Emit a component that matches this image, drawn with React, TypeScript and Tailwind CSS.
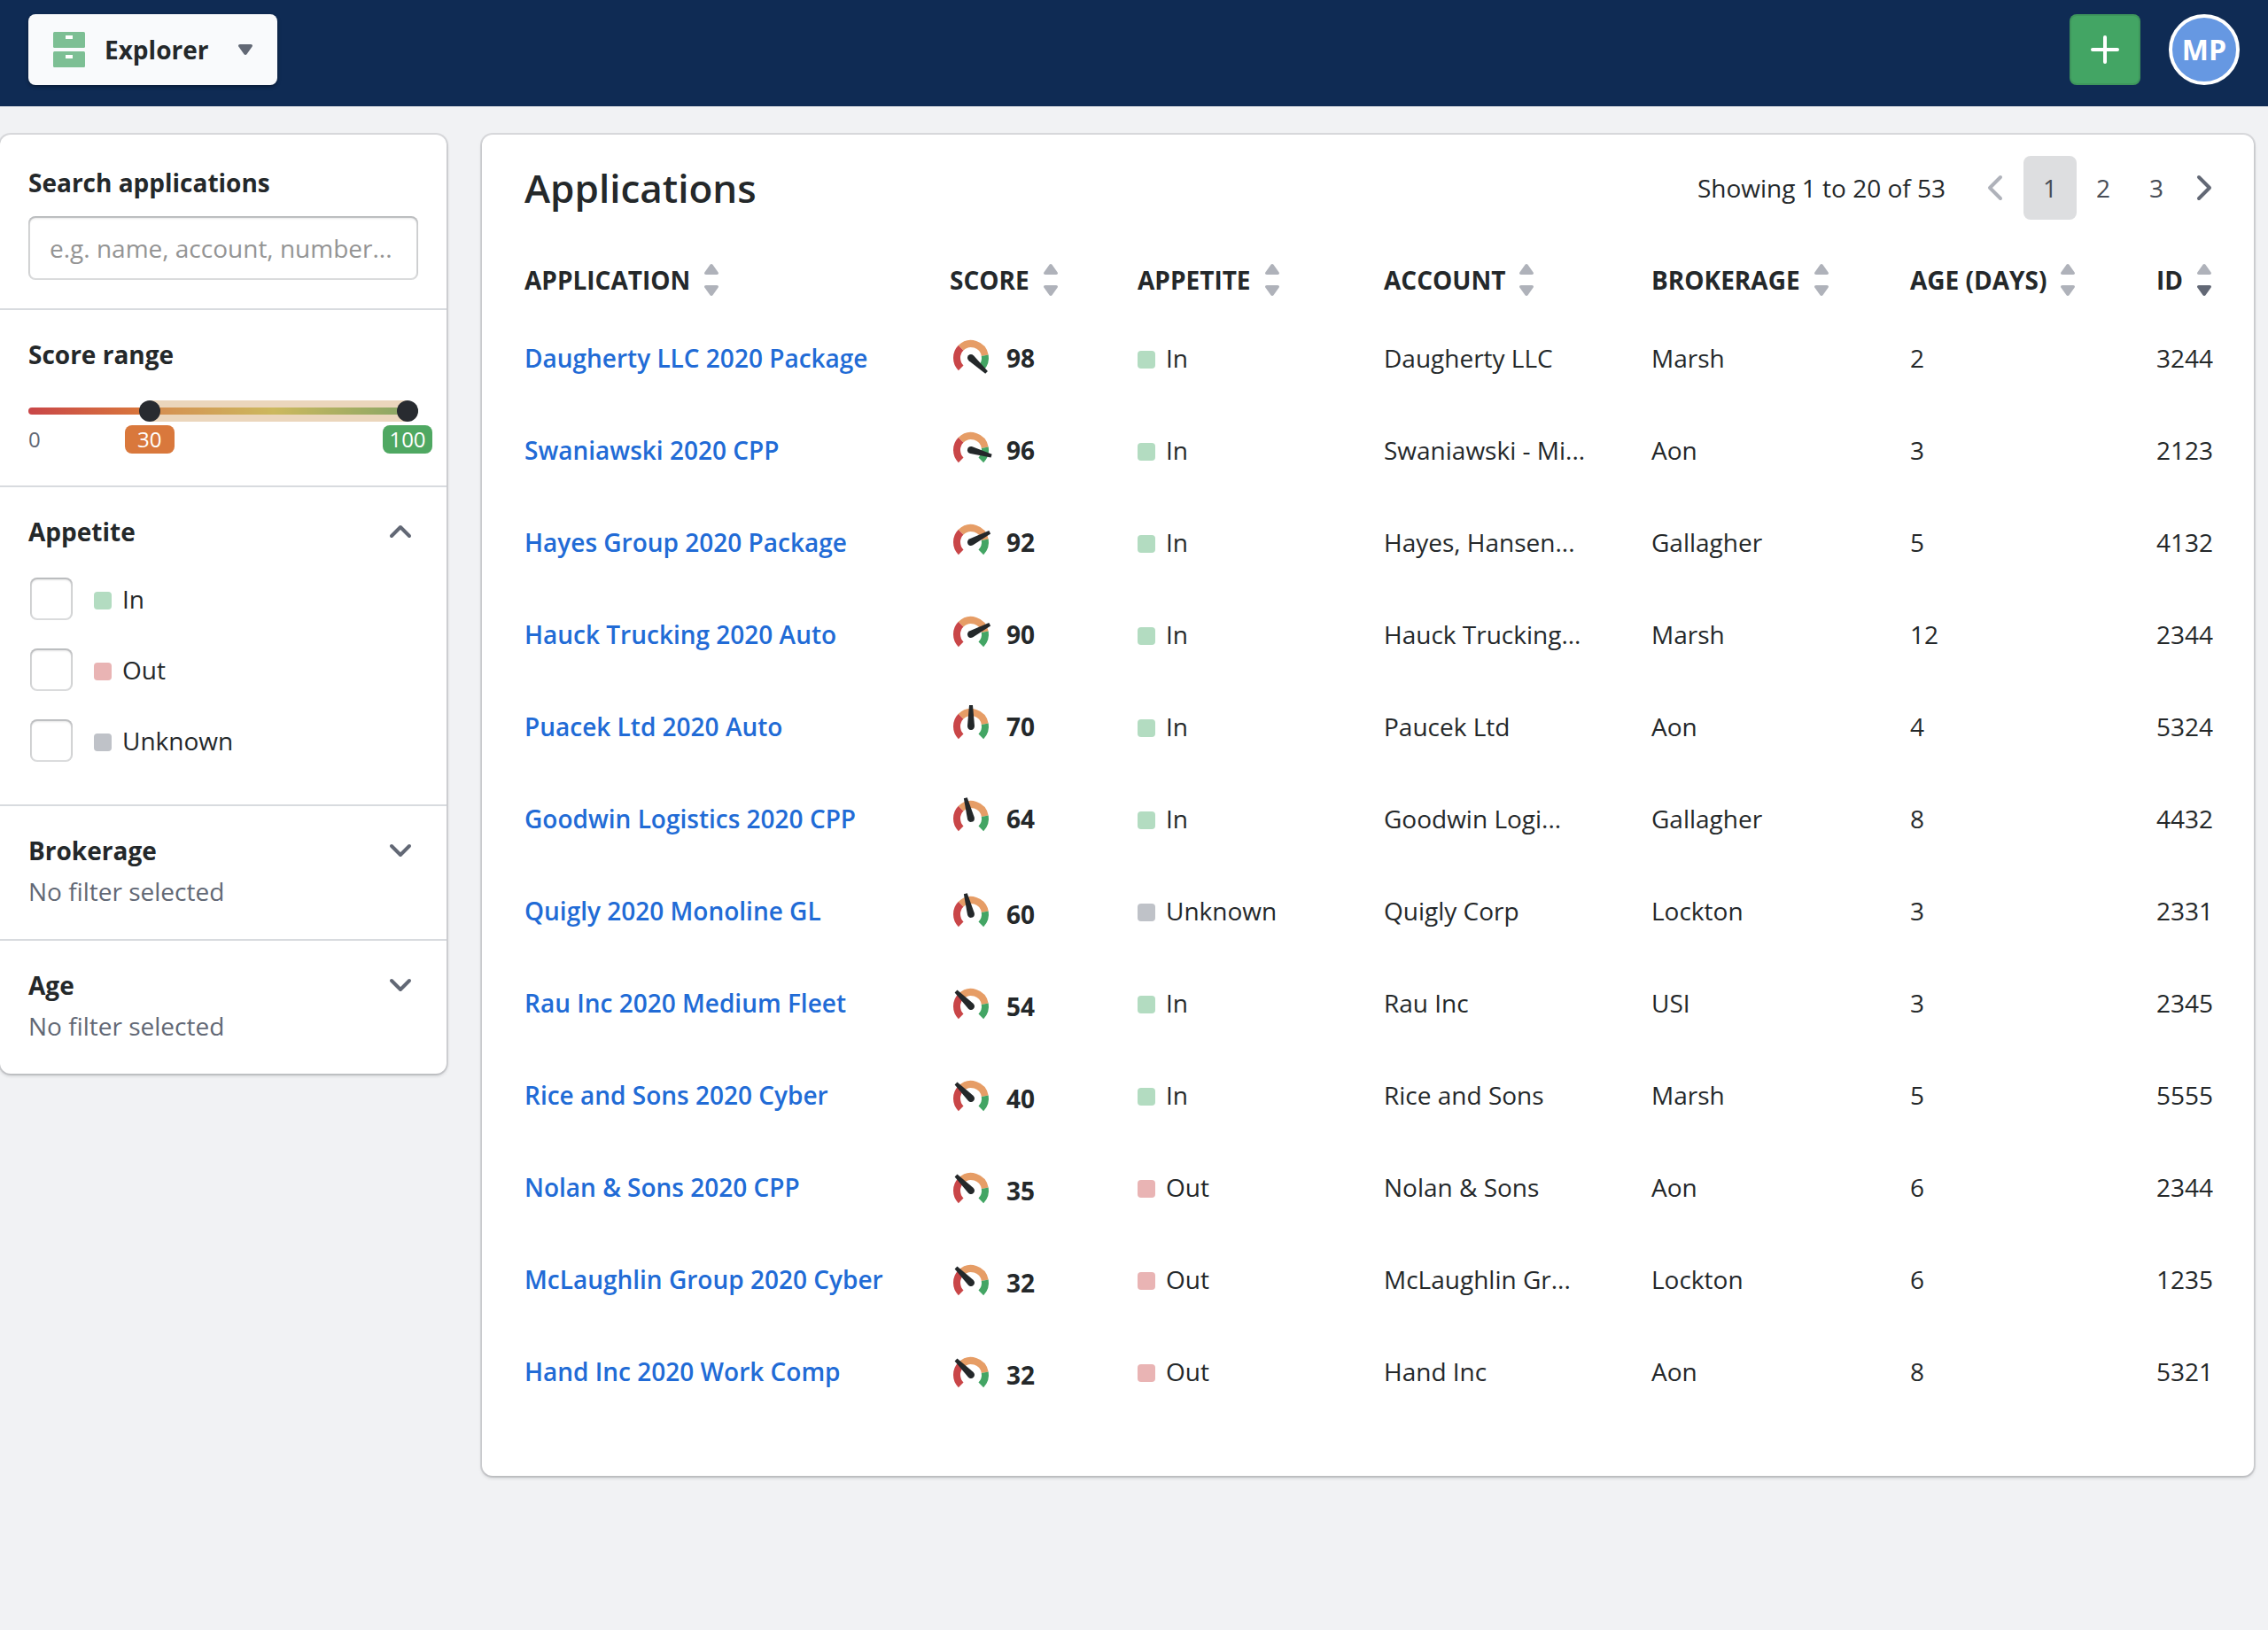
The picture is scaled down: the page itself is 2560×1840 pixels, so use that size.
import { useState } from "react";

const ROWS = [
  { name: "Daugherty LLC 2020 Package", score: 98, angle: 133, appetite: "In", account: "Daugherty LLC", brokerage: "Marsh", age: 2, id: "3244" },
  { name: "Swaniawski 2020 CPP", score: 96, angle: 106, appetite: "In", account: "Swaniawski - Mi...", brokerage: "Aon", age: 3, id: "2123" },
  { name: "Hayes Group 2020 Package", score: 92, angle: 62, appetite: "In", account: "Hayes, Hansen...", brokerage: "Gallagher", age: 5, id: "4132" },
  { name: "Hauck Trucking 2020 Auto", score: 90, angle: 62, appetite: "In", account: "Hauck Trucking...", brokerage: "Marsh", age: 12, id: "2344" },
  { name: "Puacek Ltd 2020 Auto", score: 70, angle: 0, appetite: "In", account: "Paucek Ltd", brokerage: "Aon", age: 4, id: "5324" },
  { name: "Goodwin Logistics 2020 CPP", score: 64, angle: -15, appetite: "In", account: "Goodwin Logi...", brokerage: "Gallagher", age: 8, id: "4432" },
  { name: "Quigly 2020 Monoline GL", score: 60, angle: -15, appetite: "Unknown", account: "Quigly Corp", brokerage: "Lockton", age: 3, id: "2331" },
  { name: "Rau Inc 2020 Medium Fleet", score: 54, angle: -45, appetite: "In", account: "Rau Inc", brokerage: "USI", age: 3, id: "2345" },
  { name: "Rice and Sons 2020 Cyber", score: 40, angle: -45, appetite: "In", account: "Rice and Sons", brokerage: "Marsh", age: 5, id: "5555" },
  { name: "Nolan & Sons 2020 CPP", score: 35, angle: -45, appetite: "Out", account: "Nolan & Sons", brokerage: "Aon", age: 6, id: "2344" },
  { name: "McLaughlin Group 2020 Cyber", score: 32, angle: -45, appetite: "Out", account: "McLaughlin Gr...", brokerage: "Lockton", age: 6, id: "1235" },
  { name: "Hand Inc 2020 Work Comp", score: 32, angle: -45, appetite: "Out", account: "Hand Inc", brokerage: "Aon", age: 8, id: "5321" },
];

const COLUMNS = [
  { label: "Application", width: "w-[480px]" },
  { label: "Score", width: "w-[212px]" },
  { label: "Appetite", width: "w-[278px]" },
  { label: "Account", width: "w-[302px]" },
  { label: "Brokerage", width: "w-[292px]" },
  { label: "Age (days)", width: "w-[278px]" },
  { label: "ID", width: "w-[64px]" },
];

const SWATCH: Record<string, string> = {
  In: "bg-[#b3dcc1]",
  Out: "bg-[#e9b4b4]",
  Unknown: "bg-[#bfc2c8]",
};

const CARD = "bg-white rounded-xl shadow-[0_0_0_2px_rgba(16,22,26,0.1),0_2px_4px_rgba(16,22,26,0.2)]";

function Swatch({ kind }: { kind: string }) {
  return <span className={`mt-1 size-5 shrink-0 rounded ${SWATCH[kind]}`} />;
}

function Chevron({ d, className }: { d: string; className: string }) {
  return (
    <svg viewBox="0 0 32 32" className={`size-8 ${className}`} fill="none" stroke="currentColor" strokeLinecap="round" strokeLinejoin="round" aria-hidden="true">
      <path d={d} />
    </svg>
  );
}

function SortIcon({ active }: { active: boolean }) {
  return (
    <svg viewBox="0 0 16 36" className="h-9 w-4 shrink-0 text-[#afb2ba]" fill="currentColor" aria-hidden="true">
      <path d="M9.5.8 15.7 9.4C16.4 10.6 15.7 12 14.2 12H1.8C.3 12-.4 10.6.3 9.4L6.5.8C7.3-.2 8.7-.2 9.5.8Z" />
      <path className={active ? "text-[#626875]" : ""} d="M9.5 35.2 15.7 26.6C16.4 25.4 15.7 24 14.2 24H1.8C.3 24-.4 25.4.3 26.6L6.5 35.2C7.3 36.2 8.7 36.2 9.5 35.2Z" />
    </svg>
  );
}

function Gauge({ angle }: { angle: number }) {
  return (
    <svg viewBox="0 0 48 48" className="size-12 shrink-0" fill="none" strokeWidth="8" aria-hidden="true">
      <path stroke="#c94648" d="M12.69 35.31A16 16 0 0 1 12.69 12.69" />
      <path stroke="#e69d66" d="M12.69 12.69A16 16 0 0 1 39.76 21.22" />
      <path stroke="#43a564" d="M39.76 21.22A16 16 0 0 1 35.31 35.31" />
      <path
        fill="#24282a"
        transform={`rotate(${angle} 24 24)`}
        d="M22 0H26L28 23.5C28 26.2 26.5 28 24 28C21.5 28 20 26.2 20 23.5Z"
      />
    </svg>
  );
}

function FilterSection({ title, open, children }: { title: string; open?: boolean; children: React.ReactNode }) {
  return (
    <section className="border-t-2 border-[#d8dbdf] px-8 pt-7 pb-[34px]">
      <button aria-expanded={!!open} className="flex h-11 w-full items-center justify-between pr-1 font-bold">
        {title}
        <Chevron className="stroke-4 text-[#626875]" d={open ? "M6 21 16 11 26 21" : "M6 11 16 21 26 11"} />
      </button>
      {children}
    </section>
  );
}

function ScoreRange() {
  const [low, setLow] = useState(30);
  const [high, setHigh] = useState(100);
  const thumb =
    "pointer-events-none absolute inset-0 w-full appearance-none bg-transparent [&::-webkit-slider-thumb]:pointer-events-auto [&::-webkit-slider-thumb]:size-6 [&::-webkit-slider-thumb]:appearance-none [&::-webkit-slider-thumb]:rounded-full [&::-webkit-slider-thumb]:bg-[#282b30]";

  return (
    <div className="mt-[26px]">
      <div className="relative flex h-6 items-center">
        <div className="h-2 w-full rounded-full bg-[linear-gradient(to_right,#c94648,#d9783c_30%,#c6c954_63%,#43a564)]" />
        <div
          className="absolute inset-y-0 bg-[#d3a56a]/45"
          style={{ left: `calc(12px + (100% - 24px) * ${low / 100})`, right: `calc(12px + (100% - 24px) * ${1 - high / 100})` }}
        />
        <input type="range" aria-label="Minimum score" className={thumb} value={low} onChange={(e) => setLow(Math.min(+e.target.value, high))} />
        <input type="range" aria-label="Maximum score" className={thumb} value={high} onChange={(e) => setHigh(Math.max(+e.target.value, low))} />
      </div>
      <div className="relative mt-1 h-8 text-2xl/8">
        <span className="text-[#626875]">0</span>
        <span
          className="absolute top-0 w-14 -translate-x-1/2 rounded-lg bg-[#d9783c] text-center font-medium text-white"
          style={{ left: `calc(12px + (100% - 24px) * ${low / 100})` }}
        >
          {low}
        </span>
        <span
          className="absolute top-0 w-14 -translate-x-1/2 rounded-lg bg-[#4fa862] text-center font-medium text-white"
          style={{ left: `calc(12px + (100% - 24px) * ${high / 100})` }}
        >
          {high}
        </span>
      </div>
    </div>
  );
}

function Sidebar() {
  return (
    <aside className={`w-[504px] shrink-0 ${CARD}`}>
      <div className="px-8 pt-8 pb-8">
        <label htmlFor="search" className="block h-15 pt-[2px] font-bold">
          Search applications
        </label>
        <input
          id="search"
          type="text"
          placeholder="e.g. name, account, number..."
          className="h-18 w-full rounded-lg px-6 shadow-[inset_0_0_0_2px_rgba(16,22,26,0.15),inset_0_2px_3px_rgba(16,22,26,0.2)] placeholder:text-[#949494]"
        />
      </div>

      <section className="border-t-2 border-[#d8dbdf] px-8 pt-7 pb-9">
        <h2 className="h-12 pt-[2px] font-bold">Score range</h2>
        <ScoreRange />
      </section>

      <FilterSection title="Appetite" open>
        <div className="mt-[30px] mb-[14px] flex flex-col gap-8">
          {["In", "Out", "Unknown"].map((kind) => (
            <label key={kind} className="flex items-center pl-[2px]">
              <input
                type="checkbox"
                className="mr-6 size-12 appearance-none rounded-lg bg-white shadow-[inset_0_0_0_2px_rgba(16,22,26,0.15),inset_0_2px_3px_rgba(16,22,26,0.2)] checked:bg-[#216bd6]"
              />
              <Swatch kind={kind} />
              <span className="ml-3">{kind}</span>
            </label>
          ))}
        </div>
      </FilterSection>

      <FilterSection title="Brokerage">
        <p className="mt-1 text-[#626875]">No filter selected</p>
      </FilterSection>
      <FilterSection title="Age">
        <p className="mt-1 text-[#626875]">No filter selected</p>
      </FilterSection>
    </aside>
  );
}

function Pagination() {
  const [page, setPage] = useState(1);
  return (
    <nav aria-label="Pages" className="-mr-2 flex items-center">
      <span className="mr-10">Showing 1 to 20 of 53</span>
      <button aria-label="Previous page" className="mr-4">
        <Chevron className="stroke-4 text-[#afb2ba]" d="M22 4 10 16 22 28" />
      </button>
      {[1, 2, 3].map((n) => (
        <button
          key={n}
          onClick={() => setPage(n)}
          className={`h-18 w-15 rounded-lg text-[#474d57] ${n === page ? "bg-[#dddee0]" : ""}`}
        >
          {n}
        </button>
      ))}
      <button aria-label="Next page" className="ml-2">
        <Chevron className="stroke-4 text-[#626875]" d="M10 4 22 16 10 28" />
      </button>
    </nav>
  );
}

export default function App() {
  return (
    <div className="min-h-screen bg-[#f1f2f4] font-['Open_Sans',sans-serif] text-[28px]/10 text-[#24282a]">
      <header className="flex h-30 items-start justify-between bg-[#0f2b54] px-8 pt-4">
        <button className="flex h-20 items-center rounded-lg bg-[#f9fafc] px-7 font-bold shadow-[0_2px_4px_rgba(0,0,0,0.35)]">
          <svg viewBox="0 0 36 40" className="h-10 w-9" aria-hidden="true">
            <rect width="36" height="18" rx="1.5" fill="#7dbf94" />
            <rect y="22" width="36" height="18" rx="1.5" fill="#7dbf94" />
            <path d="M14 4h8v4h-8zM14 26h8v4h-8z" fill="#fff" />
          </svg>
          <span className="mr-[34px] ml-[22px]">Explorer</span>
          <svg viewBox="0 0 16 12" className="h-3 w-4 fill-[#626875]" aria-hidden="true">
            <path d="M9.5 11.2 15.7 2.6C16.4 1.4 15.7 0 14.2 0H1.8C.3 0-.4 1.4.3 2.6L6.5 11.2C7.3 12.2 8.7 12.2 9.5 11.2Z" />
          </svg>
        </button>
        <div className="flex gap-8">
          <button
            aria-label="New application"
            className="flex size-20 items-center justify-center rounded-lg bg-[#43a564] shadow-[inset_0_0_0_2px_rgba(16,22,26,0.1)]"
          >
            <svg viewBox="0 0 32 32" className="size-8 stroke-white stroke-4" strokeLinecap="round" aria-hidden="true">
              <path d="M16 2V30M2 16H30" />
            </svg>
          </button>
          <button className="size-20 rounded-full border-4 border-white bg-[#6698e2] text-[32px] font-bold text-white">MP</button>
        </div>
      </header>

      <div className="flex items-start gap-10 pt-8 pr-4">
        <Sidebar />
        <main className={`min-w-0 flex-1 px-12 pt-6 pb-[66px] ${CARD}`}>
          <div className="flex items-center justify-between">
            <h1 className="text-[44px]/18 font-semibold">Applications</h1>
            <Pagination />
          </div>
          <table className="mt-8 w-full table-fixed text-left">
            <thead>
              <tr>
                {COLUMNS.map((c) => (
                  <th key={c.label} className={`h-18 p-0 font-bold whitespace-nowrap ${c.width}`}>
                    <button className="flex items-center gap-4 uppercase">
                      {c.label}
                      <SortIcon active={c.label === "ID"} />
                    </button>
                  </th>
                ))}
              </tr>
            </thead>
            <tbody>
              {ROWS.map((r) => (
                <tr key={r.name} className="h-26">
                  <td className="font-semibold whitespace-nowrap text-[#216bd6]">
                    <a href="#">{r.name}</a>
                  </td>
                  <td className={r.score > 60 ? "" : "pt-2"}>
                    <div className="flex items-center gap-4 font-bold">
                      <Gauge angle={r.angle} />
                      {r.score}
                    </div>
                  </td>
                  <td>
                    <div className="flex items-center gap-3">
                      <Swatch kind={r.appetite} />
                      {r.appetite}
                    </div>
                  </td>
                  <td className="whitespace-nowrap">{r.account}</td>
                  <td>{r.brokerage}</td>
                  <td>{r.age}</td>
                  <td>{r.id}</td>
                </tr>
              ))}
            </tbody>
          </table>
        </main>
      </div>
    </div>
  );
}
